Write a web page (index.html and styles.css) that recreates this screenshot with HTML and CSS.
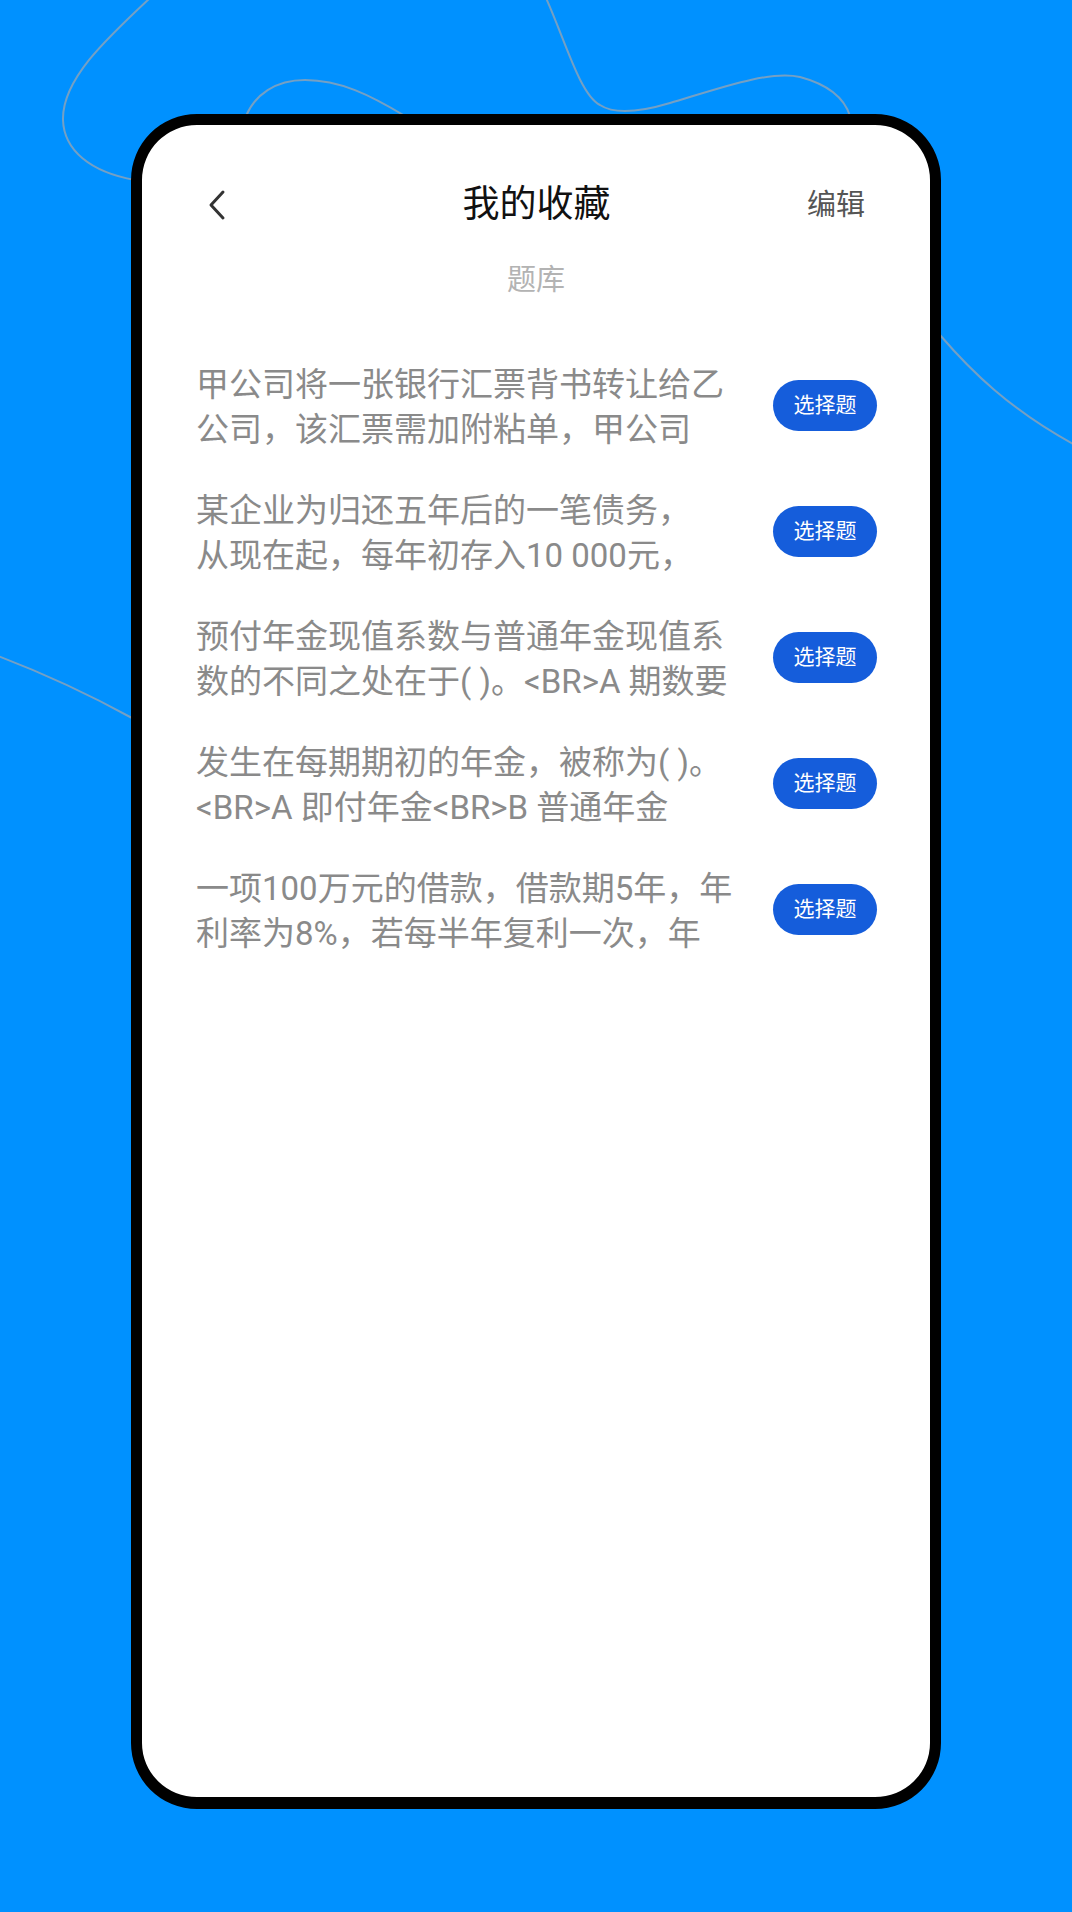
FILE: index.html
```html
<!DOCTYPE html>
<html lang="zh-CN">
<head>
<meta charset="utf-8">
<title>我的收藏</title>
<link rel="stylesheet" href="styles.css">
</head>
<body>
<svg class="bg-lines" viewBox="0 0 1072 1912" width="1072" height="1912" aria-hidden="true">
  <path d="M150,-2 C105,40 62,80 63,120 C64,150 90,172 135,180" />
  <path d="M546,-2 C565,40 580,95 600,105 C615,115 640,112 670,103 C720,88 770,70 800,77 C830,85 845,100 850,116" />
  <path d="M246,116 C255,95 275,80 305,80 C340,80 370,95 405,116" />
  <path d="M940,335 C970,370 1010,410 1075,445" />
  <path d="M-2,656 C40,672 90,695 132,718" />
</svg>
<div class="phone">
  <div class="screen">
    <header class="topbar">
      <span class="back">
        <svg viewBox="0 0 20 32" width="20" height="32"><path d="M15,3 L3,16 L15,29" /></svg>
      </span>
      <h1 class="title">我的收藏</h1>
      <span class="edit">编辑</span>
    </header>
    <div class="section">题库</div>
    <ul class="list">
      <li class="item">
        <div class="text"><span class="line">甲公司将一张银行汇票背书转让给乙</span><span class="line">公司，该汇票需加附粘单，甲公司</span></div>
        <span class="tag">选择题</span>
      </li>
      <li class="item">
        <div class="text"><span class="line">某企业为归还五年后的一笔债务，</span><span class="line">从现在起，每年初存入10 000元，</span></div>
        <span class="tag">选择题</span>
      </li>
      <li class="item">
        <div class="text"><span class="line">预付年金现值系数与普通年金现值系</span><span class="line">数的不同之处在于( )。&lt;BR&gt;A 期数要</span></div>
        <span class="tag">选择题</span>
      </li>
      <li class="item">
        <div class="text"><span class="line">发生在每期期初的年金，被称为( )。</span><span class="line">&lt;BR&gt;A 即付年金&lt;BR&gt;B 普通年金</span></div>
        <span class="tag">选择题</span>
      </li>
      <li class="item">
        <div class="text"><span class="line">一项100万元的借款，借款期5年，年</span><span class="line">利率为8%，若每半年复利一次，年</span></div>
        <span class="tag">选择题</span>
      </li>
    </ul>
  </div>
</div>
</body>
</html>
```

FILE: styles.css
```css
* { box-sizing: border-box; }

html, body {
  margin: 0;
  padding: 0;
}

body {
  width: 1072px;
  height: 1912px;
  background: #0091ff;
  position: relative;
  overflow: hidden;
  font-family: Roboto, "Noto Sans CJK SC", "Noto Sans", sans-serif;
  padding-top: 114px;
  padding-left: 131px;
}

.bg-lines {
  position: absolute;
  left: 0;
  top: 0;
  fill: none;
  stroke: #8aa2b8;
  stroke-width: 2;
  stroke-opacity: 0.85;
}

.phone {
  position: relative;
  width: 810px;
  height: 1695px;
  border: 11px solid #000;
  border-bottom-width: 12px;
  border-radius: 66px;
  background: #fff;
  overflow: hidden;
}

.screen {
  padding-top: 50px;
}

.topbar {
  display: grid;
  grid-template-columns: 1fr auto 1fr;
  align-items: center;
  height: 60px;
  padding: 0 65px 0 66px;
}

.back {
  display: flex;
  align-items: center;
  height: 32px;
}

.back svg {
  fill: none;
  stroke: #333;
  stroke-width: 3;
  stroke-linecap: round;
  stroke-linejoin: round;
}

.title {
  margin: 0;
  font-size: 37px;
  font-weight: 400;
  color: #111;
  line-height: 60px;
}

.edit {
  justify-self: end;
  font-size: 29px;
  color: #555;
  line-height: 60px;
}

.section {
  text-align: center;
  font-size: 29px;
  color: #b3b3b3;
  line-height: 40px;
  margin-top: 25px;
}

.list {
  list-style: none;
  margin: 0;
  padding: 62px 53px 0 54px;
  display: flex;
  flex-direction: column;
  gap: 36px;
}

.item {
  display: flex;
  align-items: center;
  justify-content: space-between;
}

.text {
  display: flex;
  flex-direction: column;
  font-size: 33px;
  line-height: 45px;
  color: #8a8a8a;
}

.line {
  white-space: nowrap;
}

.tag {
  flex: none;
  width: 104px;
  height: 51px;
  border-radius: 26px;
  background: #155ddb;
  color: #fff;
  font-size: 21px;
  line-height: 51px;
  text-align: center;
  margin-top: -4px;
}
```
